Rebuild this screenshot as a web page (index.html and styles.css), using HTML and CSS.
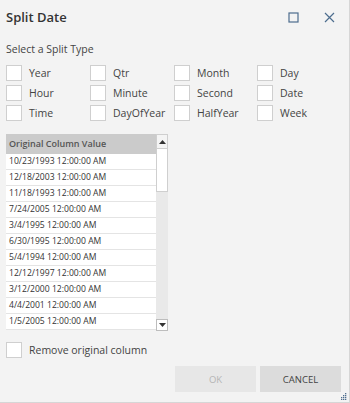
FILE: index.html
```html
<!DOCTYPE html>
<html>
<head>
<meta charset="utf-8">
<link rel="stylesheet" href="styles.css">
</head>
<body>
<div class="dialog">
  <div class="titlebar">
    <div class="title">Split Date</div>
    <div class="actions">
      <svg class="ico" width="11" height="11" viewBox="0 0 11 11"><rect x="1" y="1" width="9" height="9" fill="none" stroke="#4d6d8e" stroke-width="1.2"/></svg>
      <svg class="ico close" width="11" height="11" viewBox="0 0 11 11"><path d="M1 1L10 10M10 1L1 10" stroke="#4d6d8e" stroke-width="1.2" fill="none"/></svg>
    </div>
  </div>
  <div class="subtitle">Select a Split Type</div>
  <div class="types">
    <label class="opt"><span class="box"></span>Year</label>
    <label class="opt"><span class="box"></span>Qtr</label>
    <label class="opt"><span class="box"></span>Month</label>
    <label class="opt"><span class="box"></span>Day</label>
    <label class="opt"><span class="box"></span>Hour</label>
    <label class="opt"><span class="box"></span>Minute</label>
    <label class="opt"><span class="box"></span>Second</label>
    <label class="opt"><span class="box"></span>Date</label>
    <label class="opt"><span class="box"></span>Time</label>
    <label class="opt"><span class="box"></span>DayOfYear</label>
    <label class="opt"><span class="box"></span>HalfYear</label>
    <label class="opt"><span class="box"></span>Week</label>
  </div>
  <div class="table">
    <div class="rows">
      <div class="th">Original Column Value</div>
      <div class="td">10/23/1993 12:00:00 AM</div>
      <div class="td">12/18/2003 12:00:00 AM</div>
      <div class="td">11/18/1993 12:00:00 AM</div>
      <div class="td">7/24/2005 12:00:00 AM</div>
      <div class="td">3/4/1995 12:00:00 AM</div>
      <div class="td">6/30/1995 12:00:00 AM</div>
      <div class="td">5/4/1994 12:00:00 AM</div>
      <div class="td">12/12/1997 12:00:00 AM</div>
      <div class="td">3/12/2000 12:00:00 AM</div>
      <div class="td">4/4/2001 12:00:00 AM</div>
      <div class="td">1/5/2005 12:00:00 AM</div>
    </div>
    <div class="scrollbar">
      <div class="sbtn up"><svg width="7" height="4" viewBox="0 0 7 4"><path d="M0 4L3.5 0L7 4Z" fill="#333"/></svg></div>
      <div class="thumb"></div>
      <div class="track"></div>
      <div class="sbtn down"><svg width="7" height="4" viewBox="0 0 7 4"><path d="M0 0L3.5 4L7 0Z" fill="#333"/></svg></div>
    </div>
  </div>
  <label class="opt remove"><span class="box"></span>Remove original column</label>
  <div class="buttons">
    <div class="btn ok">OK</div>
    <div class="btn cancel">CANCEL</div>
  </div>
  <svg class="grip" width="7" height="7" viewBox="0 0 7 7">
    <rect x="5" y="0" width="1.3" height="1.3" fill="#4d6d8e"/>
    <rect x="3" y="2" width="1.3" height="1.3" fill="#4d6d8e"/>
    <rect x="5" y="2" width="1.3" height="1.3" fill="#4d6d8e"/>
    <rect x="1" y="4" width="1.3" height="1.3" fill="#4d6d8e"/>
    <rect x="3" y="4" width="1.3" height="1.3" fill="#4d6d8e"/>
    <rect x="5" y="4" width="1.3" height="1.3" fill="#4d6d8e"/>
    <rect x="1" y="6" width="1.3" height="1" fill="#4d6d8e"/>
    <rect x="3" y="6" width="1.3" height="1" fill="#4d6d8e"/>
    <rect x="5" y="6" width="1.3" height="1" fill="#4d6d8e"/>
  </svg>
</div>
</body>
</html>
```
FILE: styles.css
```css
* { box-sizing: border-box; }
html, body { margin: 0; padding: 0; }
body {
  width: 350px;
  height: 403px;
  background: #f3f3f3;
  font-family: "Open Sans", "Noto Sans", sans-serif;
  color: #333;
  overflow: hidden;
}
.dialog {
  position: relative;
  width: 350px;
  height: 403px;
  border-right: 1px solid #d6d6d6;
  border-bottom: 1px solid #d6d6d6;
  padding: 0 0 0 6px;
  display: flex;
  flex-direction: column;
}
.titlebar {
  height: 34px;
  display: flex;
  align-items: center;
  justify-content: space-between;
  padding-right: 14px;
}
.title {
  font-size: 13px;
  font-weight: 600;
  color: #333;
}
.actions {
  display: flex;
  align-items: center;
  gap: 25px;
}
.ico { display: block; }
.subtitle {
  margin-top: 8px;
  font-size: 10.5px;
  line-height: 14px;
  color: #444;
}
.types {
  margin-top: 9px;
  display: grid;
  grid-template-columns: 84px 84px 83px 84px;
  grid-auto-rows: 20px;
}
.opt {
  display: flex;
  align-items: flex-start;
  font-size: 10.5px;
  line-height: 16px;
  color: #444;
}
.box {
  width: 16px;
  height: 16px;
  background: #fff;
  border: 1px solid #cfcfcf;
  margin-right: 7px;
  flex: none;
}
.table {
  margin-top: 9px;
  display: flex;
  width: 162px;
  height: 197px;
}
.rows {
  width: 150px;
  display: flex;
  flex-direction: column;
}
.th {
  height: 20px;
  background: #cbcbcb;
  color: #555;
  font-weight: 600;
  font-size: 9px;
  line-height: 20px;
  padding-left: 3px;
}
.td {
  height: 16px;
  background: #fff;
  border-bottom: 1px solid #e4e4e4;
  font-size: 8.6px;
  line-height: 15px;
  padding-left: 3px;
  color: #333;
}
.scrollbar {
  width: 12px;
  display: flex;
  flex-direction: column;
  background: #e9e9e9;
}
.sbtn {
  height: 15px;
  display: flex;
  align-items: center;
  justify-content: center;
  background: #f4f4f4;
  border: 1px solid #cfcfcf;
}
.sbtn.down { height: 12px; background: #fff; border-color: #bdbdbd; }
.thumb {
  height: 43px;
  background: #fff;
  border: 1px solid #cfcfcf;
  border-top: none;
}
.track { flex: 1; }
.remove {
  margin-top: 11px;
}
.remove .box { margin-right: 7px; }
.remove { font-size: 10.5px; }
.buttons {
  margin-top: 8px;
  display: flex;
  justify-content: flex-end;
  gap: 4px;
  padding-right: 8px;
}
.btn {
  width: 81px;
  height: 26px;
  display: flex;
  align-items: center;
  justify-content: center;
  font-size: 9.5px;
}
.ok { background: #e7e7e7; color: #b5b5b5; }
.cancel { background: #dcdcdc; color: #444; }
.grip {
  position: absolute;
  right: 2px;
  bottom: 2px;
}
```
